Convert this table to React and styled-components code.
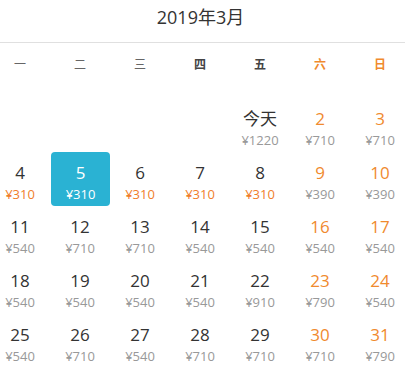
import React from "react";
import styled, { createGlobalStyle, css } from "styled-components";

const Global = createGlobalStyle`
  html, body { margin: 0; padding: 0; background: #fff; }
  body {
    font-family: "Open Sans", "Noto Sans CJK SC", sans-serif;
    overflow: hidden;
  }
`;

const Page = styled.div`
  width: 405px;
  overflow: hidden;
`;

const Header = styled.div`
  padding: 5px 4px 13px 0;
  text-align: center;
  font-size: 18px;
  line-height: 24px;
  color: #333;
  border-bottom: 1px solid #e0e0e0;
`;

const Grid = styled.div`
  width: 420px;
  margin-left: -10px;
  display: grid;
  grid-template-columns: repeat(7, 60px);
`;

const WeekRow = styled(Grid)`
  height: 40px;
  align-items: center;
  margin-bottom: 15px;
`;

const Week = styled.div`
  text-align: center;
  font-family: "Noto Sans CJK SC", sans-serif;
  font-size: 12px;
  font-weight: ${(p) => (p.$bold ? 700 : 400)};
  color: ${(p) => (p.$weekend ? "#f08a2e" : p.$bold ? "#444" : "#666")};
`;

const Cell = styled.div`
  height: 54px;
  box-sizing: border-box;
  padding-top: 10px;
  text-align: center;
  border-radius: 4px;
  ${(p) =>
    p.$selected &&
    css`
      background: #2ab2d3;
      margin-left: 1px;
    `}
`;

const Day = styled.div`
  font-size: 17px;
  font-weight: 400;
  line-height: 22px;
  color: ${(p) => (p.$selected ? "#fff" : p.$weekend ? "#f08a2e" : "#333")};
`;

const Price = styled.div`
  font-size: 13px;
  font-weight: 400;
  line-height: 20px;
  color: ${(p) => (p.$selected ? "#fff" : p.$low ? "#f07e2c" : "#999")};
`;

const weekdays = ["一", "二", "三", "四", "五", "六", "日"];
const prices = {
  1: 1220, 2: 710, 3: 710,
  4: 310, 5: 310, 6: 310, 7: 310, 8: 310, 9: 390, 10: 390,
  11: 540, 12: 710, 13: 710, 14: 540, 15: 540, 16: 540, 17: 540,
  18: 540, 19: 540, 20: 540, 21: 540, 22: 910, 23: 790, 24: 540,
  25: 540, 26: 710, 27: 540, 28: 710, 29: 710, 30: 710, 31: 790,
};

export default function App() {
  const cells = [];
  for (let i = 0; i < 4; i++) cells.push(<Cell key={"b" + i} />);
  for (let d = 1; d <= 31; d++) {
    const col = (d + 3) % 7;
    const weekend = col === 5 || col === 6;
    const selected = d === 5;
    const p = prices[d];
    cells.push(
      <Cell key={d} $selected={selected}>
        <Day $weekend={weekend} $selected={selected}>
          {d === 1 ? "今天" : d}
        </Day>
        <Price $low={p === 310} $selected={selected}>
          ¥{p}
        </Price>
      </Cell>
    );
  }
  return (
    <Page>
      <Global />
      <Header>2019年3月</Header>
      <WeekRow>
        {weekdays.map((w, i) => (
          <Week key={w} $weekend={i >= 5} $bold={i >= 3}>
            {w}
          </Week>
        ))}
      </WeekRow>
      <Grid>{cells}</Grid>
    </Page>
  );
}
